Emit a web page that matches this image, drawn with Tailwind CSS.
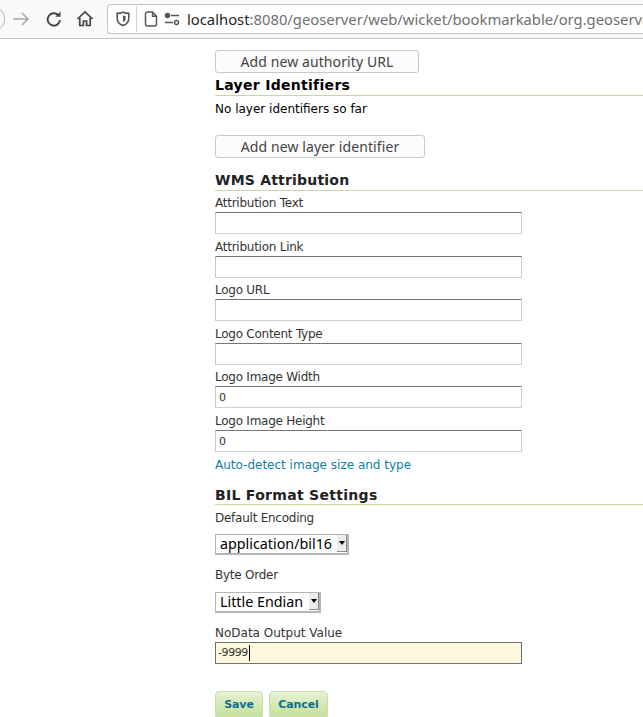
<!DOCTYPE html>
<html lang="en">

<head>
    <meta charset="UTF-8">
    <meta name="viewport" content="width=device-width, initial-scale=1.0">
    <title>Edit Layer</title>
    <script src="https://cdn.jsdelivr.net/npm/@tailwindcss/browser@4"></script>
</head>

<body class="h-[717px] w-[643px] overflow-hidden bg-white font-['DejaVu_Sans',sans-serif] text-[12px] text-[#333]">
    <!-- browser toolbar -->
    <div class="flex h-[39px] items-center overflow-hidden border-b border-[#c4c4c4] bg-[#f9f9f9]">
        <div class="ml-[-17px] h-[24px] w-[22px] shrink-0 rounded-full border border-[#b8b8b8]"></div>
        <svg class="ml-[8px] h-[18px] w-[18px] shrink-0 text-[#a8a8a8]" viewBox="0 0 18 18" fill="none" stroke="currentColor" stroke-width="1.6"><path d="M0 9h15M9 3l6 6-6 6" /></svg>
        <svg class="ml-[14px] h-[18px] w-[18px] shrink-0 text-[#444]" viewBox="0 0 18 18" fill="none" stroke="currentColor" stroke-width="1.9"><path d="M15 10a6.200 6.200 0 1 1-1.800-5" /><path d="M15.500 1.500v5.200h-5.200z" fill="currentColor" stroke="none" /></svg>
        <svg class="ml-[13px] h-[18px] w-[18px] shrink-0 text-[#444]" viewBox="0 0 18 18" fill="none" stroke="currentColor" stroke-width="1.700"><path d="M1.500 9 9 2l7.500 7" /><path d="M3.800 8v7.500h3.600V11h3.200v4.500h3.600V8" /></svg>
        <div class="ml-[13px] flex h-[30px] min-w-0 flex-1 items-center overflow-hidden rounded-l-[4px] border border-r-0 border-[#c6c6c6] bg-white pl-[8px] font-['Noto_Sans',sans-serif] text-[14.8px]">
            <svg class="h-[16px] w-[14px] shrink-0 text-[#555]" viewBox="0 0 14 16" fill="none" stroke="currentColor" stroke-width="1.600"><path d="M7 1.200c2 .9 3.900 1.200 5.800 1.200v5c0 3.400-2.500 5.800-5.800 7.200C3.700 13.200 1.200 10.800 1.200 7.400v-5C3.100 2.400 5 2.100 7 1.200z" /><path d="M7 4.500c.8.300 1.600.5 2.600.5v2.500c0 1.700-1.100 2.900-2.600 3.700z" fill="currentColor" stroke="none" /></svg>
            <div class="ml-[6px] h-[26px] w-px shrink-0 bg-[#d4d4d4]"></div>
            <svg class="ml-[7px] h-[16px] w-[14px] shrink-0 text-[#555]" viewBox="0 0 14 16" fill="none" stroke="currentColor" stroke-width="1.500"><path d="M1.500 3a2 2 0 0 1 2-2h5l4 4.200V13a2 2 0 0 1-2 2h-7a2 2 0 0 1-2-2z" /><path d="M8.500 1v4.200h4" /></svg>
            <svg class="ml-[6px] h-[14px] w-[16px] shrink-0 text-[#555]" viewBox="0 0 16 14" fill="none" stroke="currentColor" stroke-width="1.500"><circle cx="3.500" cy="3.500" r="2" fill="currentColor" /><path d="M7 3.500h8M1 10.500h8" /><circle cx="12.500" cy="10.500" r="2" /></svg>
            <span class="ml-[7px] whitespace-nowrap text-[#1f1f1f]">localhost<span class="text-[#707070]">:8080/geoserver/web/wicket/bookmarkable/org.geoserver.web.data</span></span>
        </div>
    </div>

    <!-- form column -->
    <div class="ml-[215px] w-[428px] pt-[11px]">
        <button class="block h-[23px] w-[204px] rounded-[3px] border border-[#c8c8c8] bg-[#fbfbfb] font-['Noto_Sans',sans-serif] text-[14px] leading-[20px] tracking-[0.1px] text-[#444]">Add new authority URL</button>

        <h3 class="mt-[3px] h-[20px] border-b border-[#c5d8a0] text-[14px] leading-[19px] font-bold tracking-[0.3px] text-black">Layer Identifiers</h3>
        <p class="mt-[5px] h-[15px] leading-[17px] text-black">No layer identifiers so far</p>

        <button class="mt-[19px] block h-[23px] w-[210px] rounded-[3px] border border-[#c8c8c8] bg-[#fbfbfb] font-['Noto_Sans',sans-serif] text-[14px] leading-[20px] tracking-[0.1px] text-[#444]">Add new layer identifier</button>

        <h3 class="mt-[14px] h-[19px] border-b border-[#c5d8a0] text-[14px] leading-[17px] font-bold tracking-[0.2px] text-[#222]">WMS Attribution</h3>

        <div class="mt-[4px] flex flex-col gap-[4.6px]">
            <div>
                <label class="block h-[15px] leading-[17px] tracking-[-0.25px]">Attribution Text</label>
                <input type="text" class="mt-[2px] block h-[22px] w-[307px] border border-[#d0d0d0] border-t-[#767676] border-l-[#c8c8c8] bg-white px-[3px] text-[11px]">
            </div>
            <div>
                <label class="block h-[15px] leading-[17px] tracking-[-0.25px]">Attribution Link</label>
                <input type="text" class="mt-[2px] block h-[22px] w-[307px] border border-[#d0d0d0] border-t-[#767676] border-l-[#c8c8c8] bg-white px-[3px] text-[11px]">
            </div>
            <div>
                <label class="block h-[15px] leading-[17px] tracking-[-0.25px]">Logo URL</label>
                <input type="text" class="mt-[2px] block h-[22px] w-[307px] border border-[#d0d0d0] border-t-[#767676] border-l-[#c8c8c8] bg-white px-[3px] text-[11px]">
            </div>
            <div>
                <label class="block h-[15px] leading-[17px] tracking-[-0.25px]">Logo Content Type</label>
                <input type="text" class="mt-[2px] block h-[22px] w-[307px] border border-[#d0d0d0] border-t-[#767676] border-l-[#c8c8c8] bg-white px-[3px] text-[11px]">
            </div>
            <div>
                <label class="block h-[15px] leading-[17px] tracking-[-0.25px]">Logo Image Width</label>
                <input type="text" value="0" class="mt-[2px] block h-[22px] w-[307px] border border-[#d0d0d0] border-t-[#767676] border-l-[#c8c8c8] bg-white px-[3px] pt-[1px] text-[11px]">
            </div>
            <div>
                <label class="block h-[15px] leading-[17px] tracking-[-0.25px]">Logo Image Height</label>
                <input type="text" value="0" class="mt-[2px] block h-[22px] w-[307px] border border-[#d0d0d0] border-t-[#767676] border-l-[#c8c8c8] bg-white px-[3px] pt-[1px] text-[11px]">
            </div>
        </div>

        <a href="#" class="mt-[5px] block h-[15px] leading-[17px] text-[#0d7fa5]">Auto-detect image size and type</a>

        <h3 class="mt-[15px] h-[18px] border-b border-[#c5d8a0] text-[14px] leading-[16px] font-bold tracking-[0.3px] text-[#222]">BIL Format Settings</h3>

        <label class="mt-[5px] block h-[15px] leading-[17px] tracking-[-0.25px]">Default Encoding</label>
        <div class="mt-[9px] flex h-[21px] w-[134px] items-center border border-r-2 border-b-2 border-[#b4b4b4] bg-white pl-[4px] font-['Noto_Sans',sans-serif] text-[14.3px] text-black">
            <span class="flex-1 whitespace-nowrap">application/bil16</span>
            <span class="flex h-[17px] w-[10px] shrink-0 items-center justify-center border-r border-b border-[#8c8c8c] bg-[#ececec]">
                <svg class="h-[4px] w-[6px]" viewBox="0 0 6 4"><path d="M0 0h6L3 4z" fill="#000" /></svg>
            </span>
        </div>

        <label class="mt-[12px] block h-[15px] leading-[17px] tracking-[-0.25px]">Byte Order</label>
        <div class="mt-[10px] flex h-[21px] w-[106px] items-center border border-r-2 border-b-2 border-[#b4b4b4] bg-white pl-[4px] font-['Noto_Sans',sans-serif] text-[14.3px] text-black">
            <span class="flex-1 whitespace-nowrap">Little Endian</span>
            <span class="flex h-[17px] w-[10px] shrink-0 items-center justify-center border-r border-b border-[#8c8c8c] bg-[#ececec]">
                <svg class="h-[4px] w-[6px]" viewBox="0 0 6 4"><path d="M0 0h6L3 4z" fill="#000" /></svg>
            </span>
        </div>

        <label class="mt-[12px] block h-[15px] leading-[17px]">NoData Output Value</label>
        <div class="mt-[2px] flex h-[22px] w-[307px] items-center border border-[#6e6e6e] bg-[#fdf8dc] pl-[2px] text-[11px] tracking-[-0.4px]">-9999<span class="ml-[1px] h-[16px] w-px bg-black"></span></div>

        <div class="mt-[27px] flex gap-[6px]">
            <button class="h-[26px] w-[48px] rounded-t-[4px] border border-[#c8e0a8] bg-gradient-to-b from-[#e6f2d2] to-[#c4e09c] pt-[3px] text-[11px] font-bold tracking-[-0.1px] text-[#0d6f8f]">Save</button>
            <button class="h-[26px] w-[59px] rounded-t-[4px] border border-[#c8e0a8] bg-gradient-to-b from-[#e6f2d2] to-[#c4e09c] pt-[3px] text-[11px] font-bold tracking-[-0.1px] text-[#0d6f8f]">Cancel</button>
        </div>
    </div>
</body>

</html>
